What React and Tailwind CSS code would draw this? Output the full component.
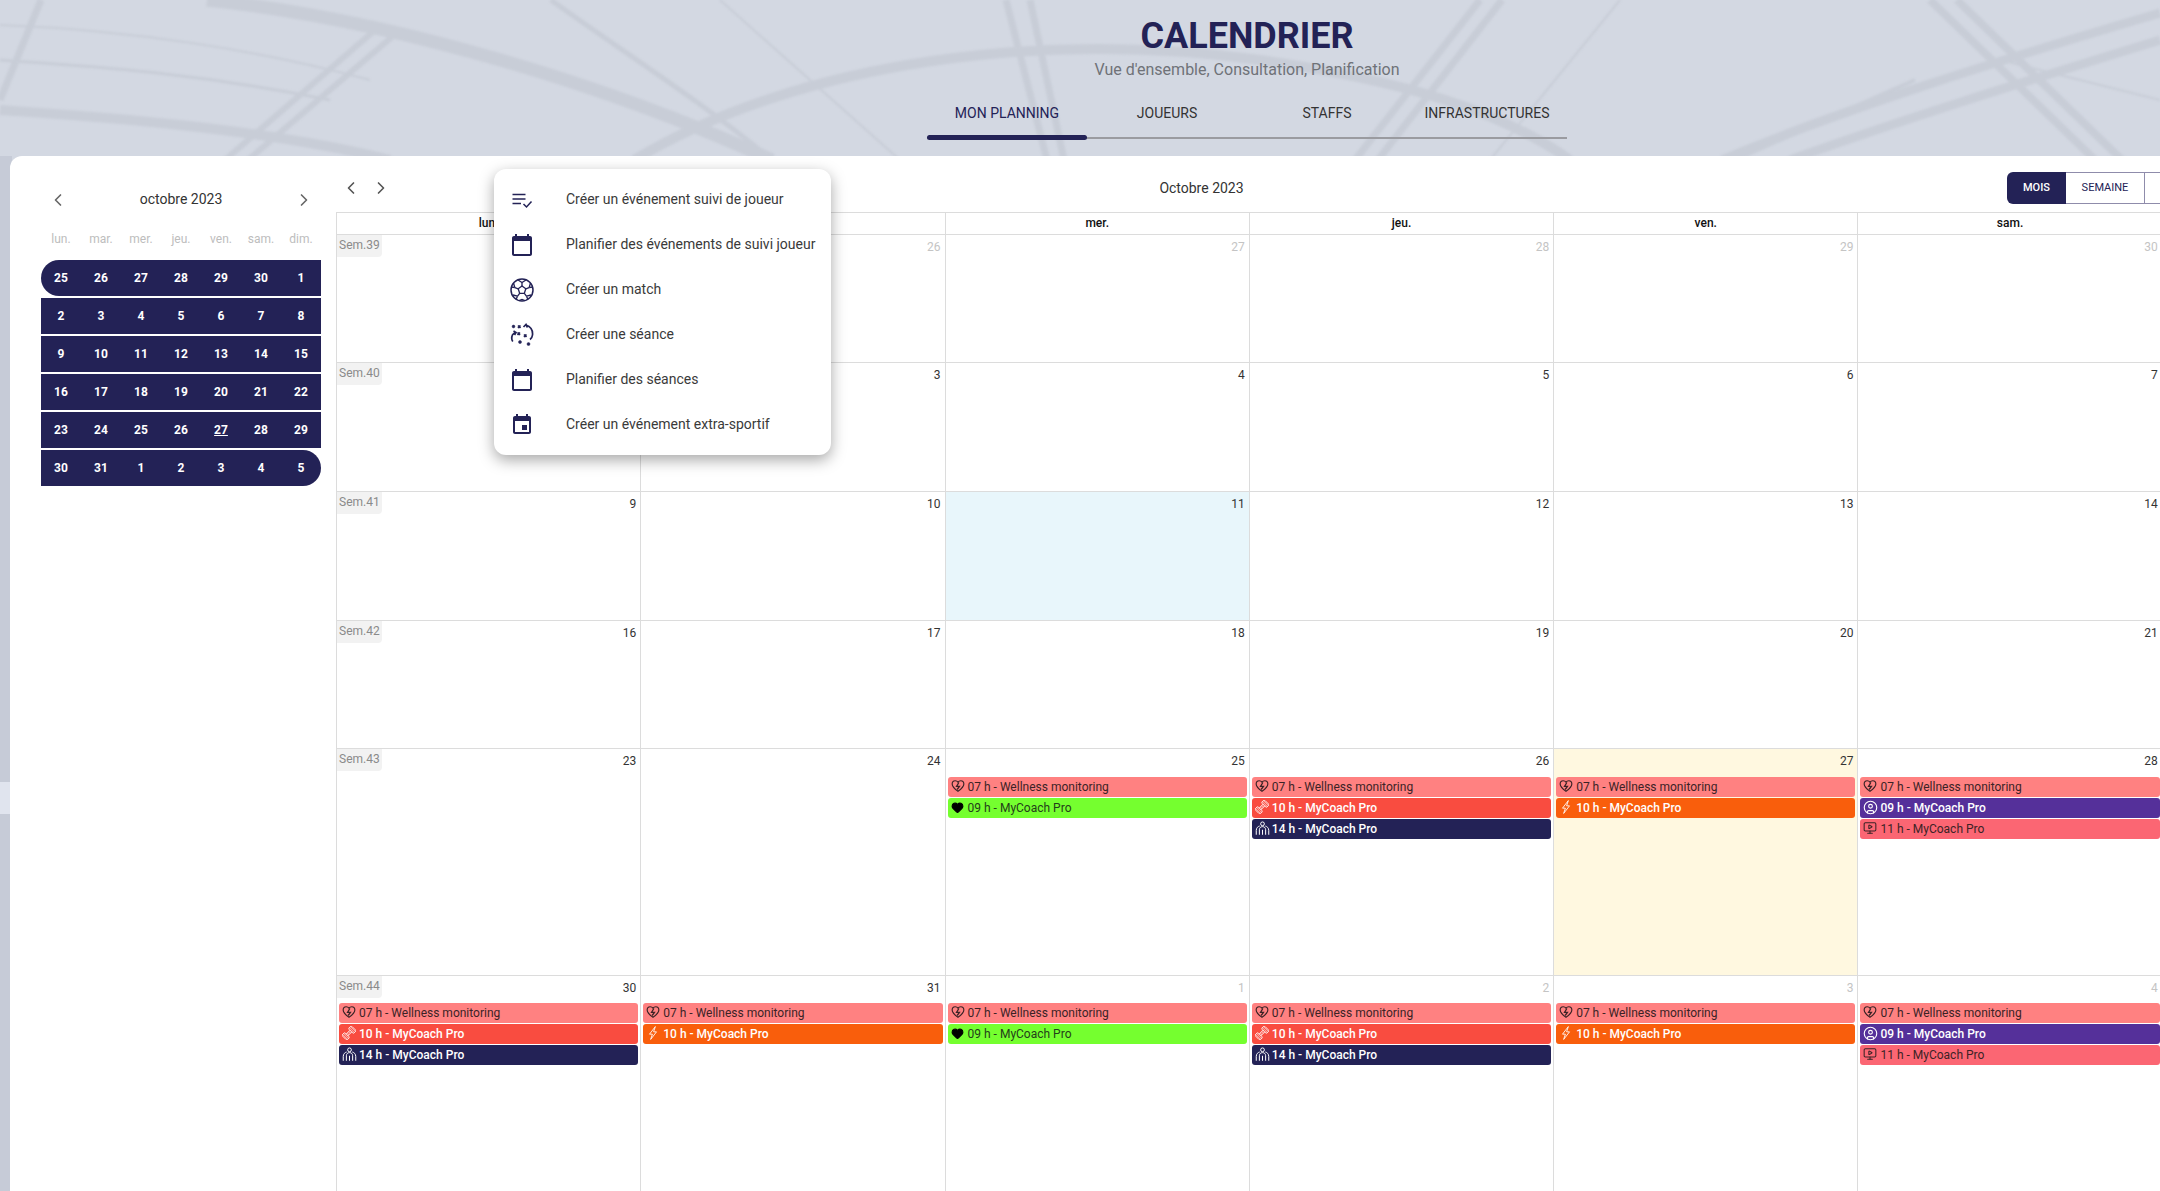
import { ChevronLeft, ChevronRight, CircleUser, MonitorPlay, Heart } from "lucide-react";

const navy = "#232256";

const HeartBolt = () => (
  <svg width="14" height="14" viewBox="0 0 24 24" fill="none" stroke="currentColor" strokeWidth="2">
    <path d="M12 21C5 16 2 12.500 2 8.500 2 5 4.600 3 7.200 3c2 0 3.700 1 4.800 2.600C13.100 4 14.800 3 16.800 3 19.400 3 22 5 22 8.500 22 12.500 19 16 12 21z" />
    <path d="M13.500 6l-4 6.500h5L10.500 18" strokeWidth="2.200" />
  </svg>
);

const Lifters = () => (
  <svg width="15" height="15" viewBox="0 0 24 24" fill="none" stroke="currentColor" strokeWidth="1.600">
    <circle cx="12" cy="4.500" r="3" />
    <path d="M2 22v-7c0-4 3-6.500 5.500-7M22 22v-7c0-4-3-6.500-5.500-7M7 22v-8c0-3 2-5 5-5s5 2 5 5v8M12 14v8" />
  </svg>
);

// hatched dumbbell, drawn on the diagonal
const HatchBell = () => (
  <svg width="14" height="14" viewBox="0 0 24 24" fill="none" stroke="currentColor">
    <g transform="rotate(-45 12 12)">
      <rect x="0.500" y="6" width="7" height="12" rx="2" strokeWidth="1.500" />
      <rect x="16.500" y="6" width="7" height="12" rx="2" strokeWidth="1.500" />
      <path d="M7 10h10M7 14h10" strokeWidth="1.500" />
      <path d="M2.500 6v12M5 6v12M19 6v12M21.500 6v12M10 10v4M13.500 10v4" strokeWidth="1" />
    </g>
  </svg>
);

const ThinBolt = () => (
  <svg width="14" height="16" viewBox="0 0 24 24" fill="none" stroke="currentColor" strokeWidth="1.500" strokeLinejoin="round">
    <path d="M16 1L6 14h5l-3 9 10-13h-5l3-9z" />
  </svg>
);

const eventTypes = {
  wellness: { time: "07 h - Wellness monitoring", box: "bg-[#ff8181] text-[#3b2326]", icon: <HeartBolt /> },
  green: { time: "09 h - MyCoach Pro", box: "bg-[#75ff2f] text-[#24401a]", icon: <Heart size={13} fill="#000" stroke="#000" /> },
  red: { time: "10 h - MyCoach Pro", box: "bg-[#f94c40] text-white font-medium", icon: <HatchBell /> },
  navy: { time: "14 h - MyCoach Pro", box: "bg-[#232256] text-white font-medium", icon: <Lifters /> },
  orange: { time: "10 h - MyCoach Pro", box: "bg-[#f95e0c] text-white font-medium", icon: <ThinBolt /> },
  purple: { time: "09 h - MyCoach Pro", box: "bg-[#55309a] text-white font-medium", icon: <CircleUser size={15} strokeWidth={1.800} /> },
  pink: { time: "11 h - MyCoach Pro", box: "bg-[#fb6673] text-[#3b2326]", icon: <MonitorPlay size={14} strokeWidth={1.800} /> },
};

const weeks = [
  { label: "Sem.39", h: "h-[128px]", days: [[25, 1], [26, 1], [27, 1], [28, 1], [29, 1], [30, 1], [1, 0]] },
  { label: "Sem.40", h: "h-[129px]", days: [[2], [3], [4], [5], [6], [7], [8]] },
  { label: "Sem.41", h: "h-[129px]", days: [[9], [10], [11], [12], [13], [14], [15]] },
  { label: "Sem.42", h: "h-[128px]", days: [[16], [17], [18], [19], [20], [21], [22]] },
  {
    label: "Sem.43",
    h: "h-[227px]",
    days: [
      [23], [24],
      [25, 0, ["wellness", "green"]],
      [26, 0, ["wellness", "red", "navy"]],
      [27, 0, ["wellness", "orange"]],
      [28, 0, ["wellness", "purple", "pink"]],
      [29],
    ],
  },
  {
    label: "Sem.44",
    h: "h-[230px]",
    tight: true,
    days: [
      [30, 0, ["wellness", "red", "navy"]],
      [31, 0, ["wellness", "orange"]],
      [1, 1, ["wellness", "green"]],
      [2, 1, ["wellness", "red", "navy"]],
      [3, 1, ["wellness", "orange"]],
      [4, 1, ["wellness", "purple", "pink"]],
      [5, 1],
    ],
  },
];

const miniWeeks = [
  [25, 26, 27, 28, 29, 30, 1],
  [2, 3, 4, 5, 6, 7, 8],
  [9, 10, 11, 12, 13, 14, 15],
  [16, 17, 18, 19, 20, 21, 22],
  [23, 24, 25, 26, 27, 28, 29],
  [30, 31, 1, 2, 3, 4, 5],
];

const CalIcon = () => (
  <svg width="24" height="24" viewBox="0 0 24 24" fill={navy}>
    <path d="M20 3h-1V1h-2v2H7V1H5v2H4c-1.100 0-2 .9-2 2v16c0 1.100.9 2 2 2h16c1.100 0 2-.9 2-2V5c0-1.100-.9-2-2-2zm0 18H4V8h16v13z" />
  </svg>
);

const menuItems = [
  {
    text: "Créer un événement suivi de joueur",
    icon: (
      <svg width="24" height="24" viewBox="0 0 24 24" fill="none" stroke={navy}>
        <path d="M2.500 6.500h13M2.500 11h13M2.500 15.500h8.500" strokeWidth="1.500" />
        <path d="M13.500 16l3 3 5-5.500" strokeWidth="1.500" />
      </svg>
    ),
  },
  { text: "Planifier des événements de suivi joueur", icon: <CalIcon /> },
  {
    text: "Créer un match",
    icon: (
      <svg width="24" height="24" viewBox="0 0 24 24" fill="none" stroke={navy} strokeWidth="1.300">
        <circle cx="12" cy="12" r="11" strokeWidth="1.500" />
        <path d="M12 8l3.800 2.800-1.450 4.500h-4.700L8.200 10.800z" />
        <path d="M12 8V4.500M15.800 10.800l3.300-1.100M14.350 15.300l2.100 2.900M9.650 15.300l-2.100 2.900M8.200 10.800L4.900 9.700" />
        <path d="M8 2l4 2.500L16 2M19.100 9.700L22.600 9M20.500 5L19.100 9.700M16.450 18.200l1.500 3.200M21 17l-4.550 1.200M7.550 18.200l-1.500 3.200M3 17l4.550 1.200M4.900 9.700L1.400 9M3.500 5l1.400 4.700M9 22.500l3-1 3 1" />
      </svg>
    ),
  },
  {
    text: "Créer une séance",
    icon: (
      <svg width="24" height="24" viewBox="0 0 24 24" fill={navy} stroke={navy}>
        <circle cx="3.500" cy="3.500" r="1.400" strokeWidth="0.500" />
        <circle cx="10" cy="19" r="1.500" strokeWidth="0.500" />
        <circle cx="18.500" cy="21" r="1.500" strokeWidth="0.500" />
        <g fill="none" strokeWidth="1.700">
          <path d="M8 2.500l2.500 2.500M10.500 2.500L8 5M7.500 9.500l2.500 2.500M10 9.500L7.500 12M14 11.500l2.500 2.500M16.500 11.500L14 14" />
          <path d="M16 2c4 1.500 7 5 6.500 10-.2 2-1.200 3.500-2.500 4.500M13.500 4L16 1.500l1.500 3" />
          <path d="M5.500 9.500C3 10.500 1.500 13 1.800 16c.1 1 .5 1.800 1 2.500M3.500 8l2.500 1.500-1.500 2.500" />
        </g>
      </svg>
    ),
  },
  { text: "Planifier des séances", icon: <CalIcon /> },
  {
    text: "Créer un événement extra-sportif",
    icon: (
      <svg width="24" height="24" viewBox="0 0 24 24" fill={navy}>
        <path d="M17 12h-5v5h5v-5zM16 1v2H8V1H6v2H5c-1.110 0-1.990.9-1.990 2L3 19c0 1.100.89 2 2 2h14c1.100 0 2-.9 2-2V5c0-1.100-.9-2-2-2h-1V1h-2zm3 18H5V8h14v11z" />
      </svg>
    ),
  },
];

function Backdrop() {
  return (
    <svg className="absolute inset-0" width="2160" height="1191" viewBox="0 0 2160 1191" fill="none">
      <rect width="2160" height="1191" fill="#d3d8e2" />
      <g stroke="#c8cdd7" className="blur-[1px]">
        <path d="M207 0C400 20 620 90 772 160" strokeWidth="13" />
        <path d="M634 160C800 60 1050 30 1260 60 1400 80 1500 110 1570 160" strokeWidth="10" />
        <path d="M551 0C620 50 700 100 772 160" strokeWidth="5" />
        <path d="M400 30L248 160M375 30L225 160" strokeWidth="6" />
        <path d="M1006 0L1047 160M1030 0L1064 160" strokeWidth="7" />
        <path d="M1502 0L1378 160M1480 0L1355 160" strokeWidth="7" />
        <path d="M1957 0L2122 160M1930 0L2095 160" strokeWidth="8" />
        <path d="M2160 13C2000 60 1840 110 1722 160M2160 40C2030 80 1900 120 1790 160" strokeWidth="9" />
        <path d="M1915 80L1735 160" strokeWidth="4" />
        <path d="M41 0L0 100" strokeWidth="7" />
        <path d="M0 60C70 65 180 70 330 100" strokeWidth="3" />
        <path d="M0 110C70 115 250 125 390 160" strokeWidth="10" />
        <path d="M0 25C130 30 260 50 370 80" strokeWidth="2" />
        <path d="M720 0L900 160M1620 0L1490 160M2000 60L2160 100" strokeWidth="2" />
      </g>
      <rect y="156" width="12" height="1035" fill="#c6cbd7" />
      <rect y="782" width="12" height="32" fill="#e0e4ee" />
    </svg>
  );
}

function MiniCalendar() {
  return (
    <div className="w-[326px] shrink-0 pl-[31px] pt-[33px]">
      <div className="flex w-[280px] items-center justify-between px-[7px] text-[#666]">
        <ChevronLeft size={20} />
        <span className="text-[14px] text-[#333]">octobre 2023</span>
        <ChevronRight size={20} />
      </div>
      <div className="mt-[19px] grid w-[280px] grid-cols-7 text-center text-[12px] leading-[20px] text-[#bdbdbd]">
        {["lun.", "mar.", "mer.", "jeu.", "ven.", "sam.", "dim."].map((d) => (
          <span key={d}>{d}</span>
        ))}
      </div>
      <div className="mt-[11px] flex w-[280px] flex-col gap-[2px]">
        {miniWeeks.map((week, i) => (
          <div
            key={i}
            className={`grid h-[36px] grid-cols-7 items-center bg-[#232256] text-center text-[12px] font-bold text-white ${i === 0 ? "rounded-l-[18px]" : ""} ${i === 5 ? "rounded-r-[18px]" : ""}`}
          >
            {week.map((d) => (
              <span key={d} className={i === 4 && d === 27 ? "underline" : ""}>
                {d}
              </span>
            ))}
          </div>
        ))}
      </div>
    </div>
  );
}

function DayCell({ day, muted, events, weekLabel, bg, tight }) {
  return (
    <div className={`border-l border-[#dcdcdc] ${bg}`}>
      <div className="flex h-[23px] items-start justify-between">
        {weekLabel ? (
          <span className="h-[22px] w-[45px] rounded-br-[4px] bg-[#f2f2f2] pl-[2px] text-[12px] leading-[20px] text-[#8a8a8a]">
            {weekLabel}
          </span>
        ) : (
          <span />
        )}
        <span className={`pr-[4px] pt-[5px] text-[12px] leading-[14px] ${muted ? "text-[#c4c4c4]" : "text-[#333]"}`}>{day}</span>
      </div>
      {events && (
        <div className={`flex flex-col gap-[1px] pl-[2px] pr-[2px] ${tight ? "mt-[4px]" : "mt-[5px]"}`}>
          {events.map((key) => {
            const ev = eventTypes[key];
            return (
              <div key={key} className={`flex h-[20px] items-center rounded-[3px] pl-[3px] text-[12px] ${ev.box}`}>
                <span className="flex w-[17px] -translate-y-[1px] items-center">{ev.icon}</span>
                <span>{ev.time}</span>
              </div>
            );
          })}
        </div>
      )}
    </div>
  );
}

function BigCalendar() {
  return (
    <div className="min-w-0 flex-1 overflow-hidden">
      <div className="w-[2130px]">
        <div className="flex h-[56px] items-center justify-between pt-[8px]">
          <div className="flex w-[60px] items-center gap-[10px] pl-[5px] text-[#555]">
            <ChevronLeft size={20} />
            <ChevronRight size={20} />
          </div>
          <span className="text-[14px] text-[#333]">Octobre 2023</span>
          <div className="flex h-[32px] w-[459px] text-[11px]">
            <span className="flex w-[59px] items-center justify-center rounded-l-[6px] bg-[#232256] font-medium text-white">MOIS</span>
            <span className="flex w-[79px] items-center justify-center border-y border-r border-[#8f8cab] text-[#232256]">SEMAINE</span>
            <span className="flex flex-1 items-center justify-center border-y border-r border-[#8f8cab] text-[#232256]">JOUR</span>
          </div>
        </div>
        <div className="grid h-[23px] grid-cols-7 border-y border-[#dcdcdc] text-center text-[12px] font-medium leading-[20px] text-[#111]">
          {["lun.", "mar.", "mer.", "jeu.", "ven.", "sam.", "dim."].map((d) => (
            <span key={d} className="border-l border-[#dcdcdc]">{d}</span>
          ))}
        </div>
        {weeks.map((week, r) => (
          <div key={week.label} className={`grid grid-cols-7 border-b border-[#dcdcdc] ${week.h}`}>
            {week.days.map(([day, muted, events], c) => (
              <DayCell
                key={c}
                day={day}
                muted={muted}
                events={events}
                tight={week.tight}
                weekLabel={c === 0 ? week.label : null}
                bg={day === 11 ? "bg-[#e8f6fb]" : r === 4 && day === 27 ? "bg-[#fff8e0]" : ""}
              />
            ))}
          </div>
        ))}
      </div>
    </div>
  );
}

export default function App() {
  return (
    <div className="relative h-[1191px] w-[2160px] overflow-hidden font-['Roboto',sans-serif]">
      <Backdrop />
      <header className="relative flex h-[156px] flex-col items-center pl-[334px]">
        <h1 className="mt-[15px] text-[36px] font-bold leading-[42px] text-[#232256]">CALENDRIER</h1>
        <p className="mt-[3px] text-[16px] leading-[20px] text-[#6f7278]">Vue d'ensemble, Consultation, Planification</p>
        <nav className="mt-[23px] w-[640px] border-b-2 border-[#9a9ba0]">
          <div className="grid grid-cols-4 text-center text-[14px] leading-[20px] text-[#333]">
            <span className="relative pb-[14px] text-[#232256]">
              MON PLANNING
              <span className="absolute -bottom-[3px] left-0 h-[5px] w-full rounded-full bg-[#232256]" />
            </span>
            <span>JOUEURS</span>
            <span>STAFFS</span>
            <span>INFRASTRUCTURES</span>
          </div>
        </nav>
      </header>
      <main className="relative ml-[10px] flex h-[1035px] w-[2150px] rounded-tl-[12px] bg-white">
        <MiniCalendar />
        <BigCalendar />
        <div className="absolute left-[484px] top-[13px] w-[337px] rounded-[12px] bg-white py-[8px] shadow-[0_5px_15px_rgba(0,0,0,0.35)]">
          {menuItems.map((item) => (
            <div key={item.text} className="flex h-[45px] items-center pl-[16px] text-[14px] text-[#3a3a3a]">
              <span className="flex w-[56px] shrink-0 items-center">{item.icon}</span>
              <span className="whitespace-nowrap">{item.text}</span>
            </div>
          ))}
        </div>
      </main>
    </div>
  );
}
